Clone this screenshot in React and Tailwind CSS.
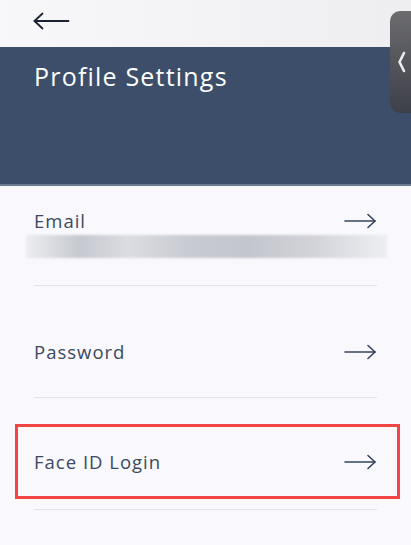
import React from "react";

function ArrowRight() {
  return (
    <svg width="32" height="16" viewBox="0 0 32 16" fill="none" stroke="#34445c" strokeWidth="1.6" strokeLinecap="round" strokeLinejoin="round">
      <path d="M1 8h30" />
      <path d="M24 1.5L31 8l-7 6.5" />
    </svg>
  );
}

function Row({ label }) {
  return (
    <div className="flex items-center justify-between pl-[34px] pr-[35px] h-[27px]">
      <span className="text-[18.5px] tracking-[1px] text-[#3a4a60]">{label}</span>
      <ArrowRight />
    </div>
  );
}

export default function App() {
  return (
    <div
      className="relative w-[411px] h-[545px] overflow-hidden bg-[#f9f8fc]"
      style={{ fontFamily: '"Open Sans", "Noto Sans", sans-serif' }}
    >
      <div className="h-[47px] flex items-center pl-[33px] pb-[5px] bg-gradient-to-r from-[#f8f7fa] to-[#eeeef1]">
        <svg width="37" height="18" viewBox="0 0 37 18" fill="none" stroke="#1b2233" strokeWidth="1.8" strokeLinecap="round" strokeLinejoin="round">
          <path d="M1.5 9h34" />
          <path d="M9.5 1.5L1.5 9l8 7.5" />
        </svg>
      </div>

      <div className="h-[139px] bg-[#3c4e6a] border-b-2 border-[#6b7b90] pt-[11px] pl-[34px]">
        <h1 className="text-[25px] font-medium text-white tracking-[1.2px]">Profile Settings</h1>
      </div>

      <div className="pt-[21px]">
        <Row label="Email" />
        <div className="ml-[26px] mt-[1px] h-[23px] w-[361px] bg-[linear-gradient(90deg,#eceef1_0%,#c6c8d0_15%,#dcdde2_28%,#c9cbd3_45%,#c4c6ce_62%,#d3d4da_80%,#eeeff2_100%)] blur-[1px]" />
        <div className="mx-[34px] mt-[27px] h-px bg-[#e3e3ea]" />

        <div className="pt-[52px]">
          <Row label="Password" />
        </div>
        <div className="mx-[34px] mt-[32px] h-px bg-[#e3e3ea]" />

        <div className="ml-[15px] mt-[26px] w-[385px] h-[75px] border-[3px] border-[#f24545] flex items-center justify-between pl-[16px] pr-[21px]">
          <span className="text-[18.5px] tracking-[1px] text-[#3a4a60]">Face ID Login</span>
          <ArrowRight />
        </div>
        <div className="mx-[34px] mt-[10px] h-px bg-[#e3e3ea]" />
      </div>

      <div className="absolute right-0 top-[11px] w-[21px] h-[102px] rounded-l-[10px] bg-gradient-to-b from-[#6c6c70] to-[#3e4048] flex items-center justify-center pl-[2px]">
        <svg width="9" height="22" viewBox="0 0 9 22" fill="none" stroke="#ececf0" strokeWidth="2.6" strokeLinecap="round" strokeLinejoin="round">
          <path d="M7 2L2.5 11 7 20" />
        </svg>
      </div>
    </div>
  );
}
